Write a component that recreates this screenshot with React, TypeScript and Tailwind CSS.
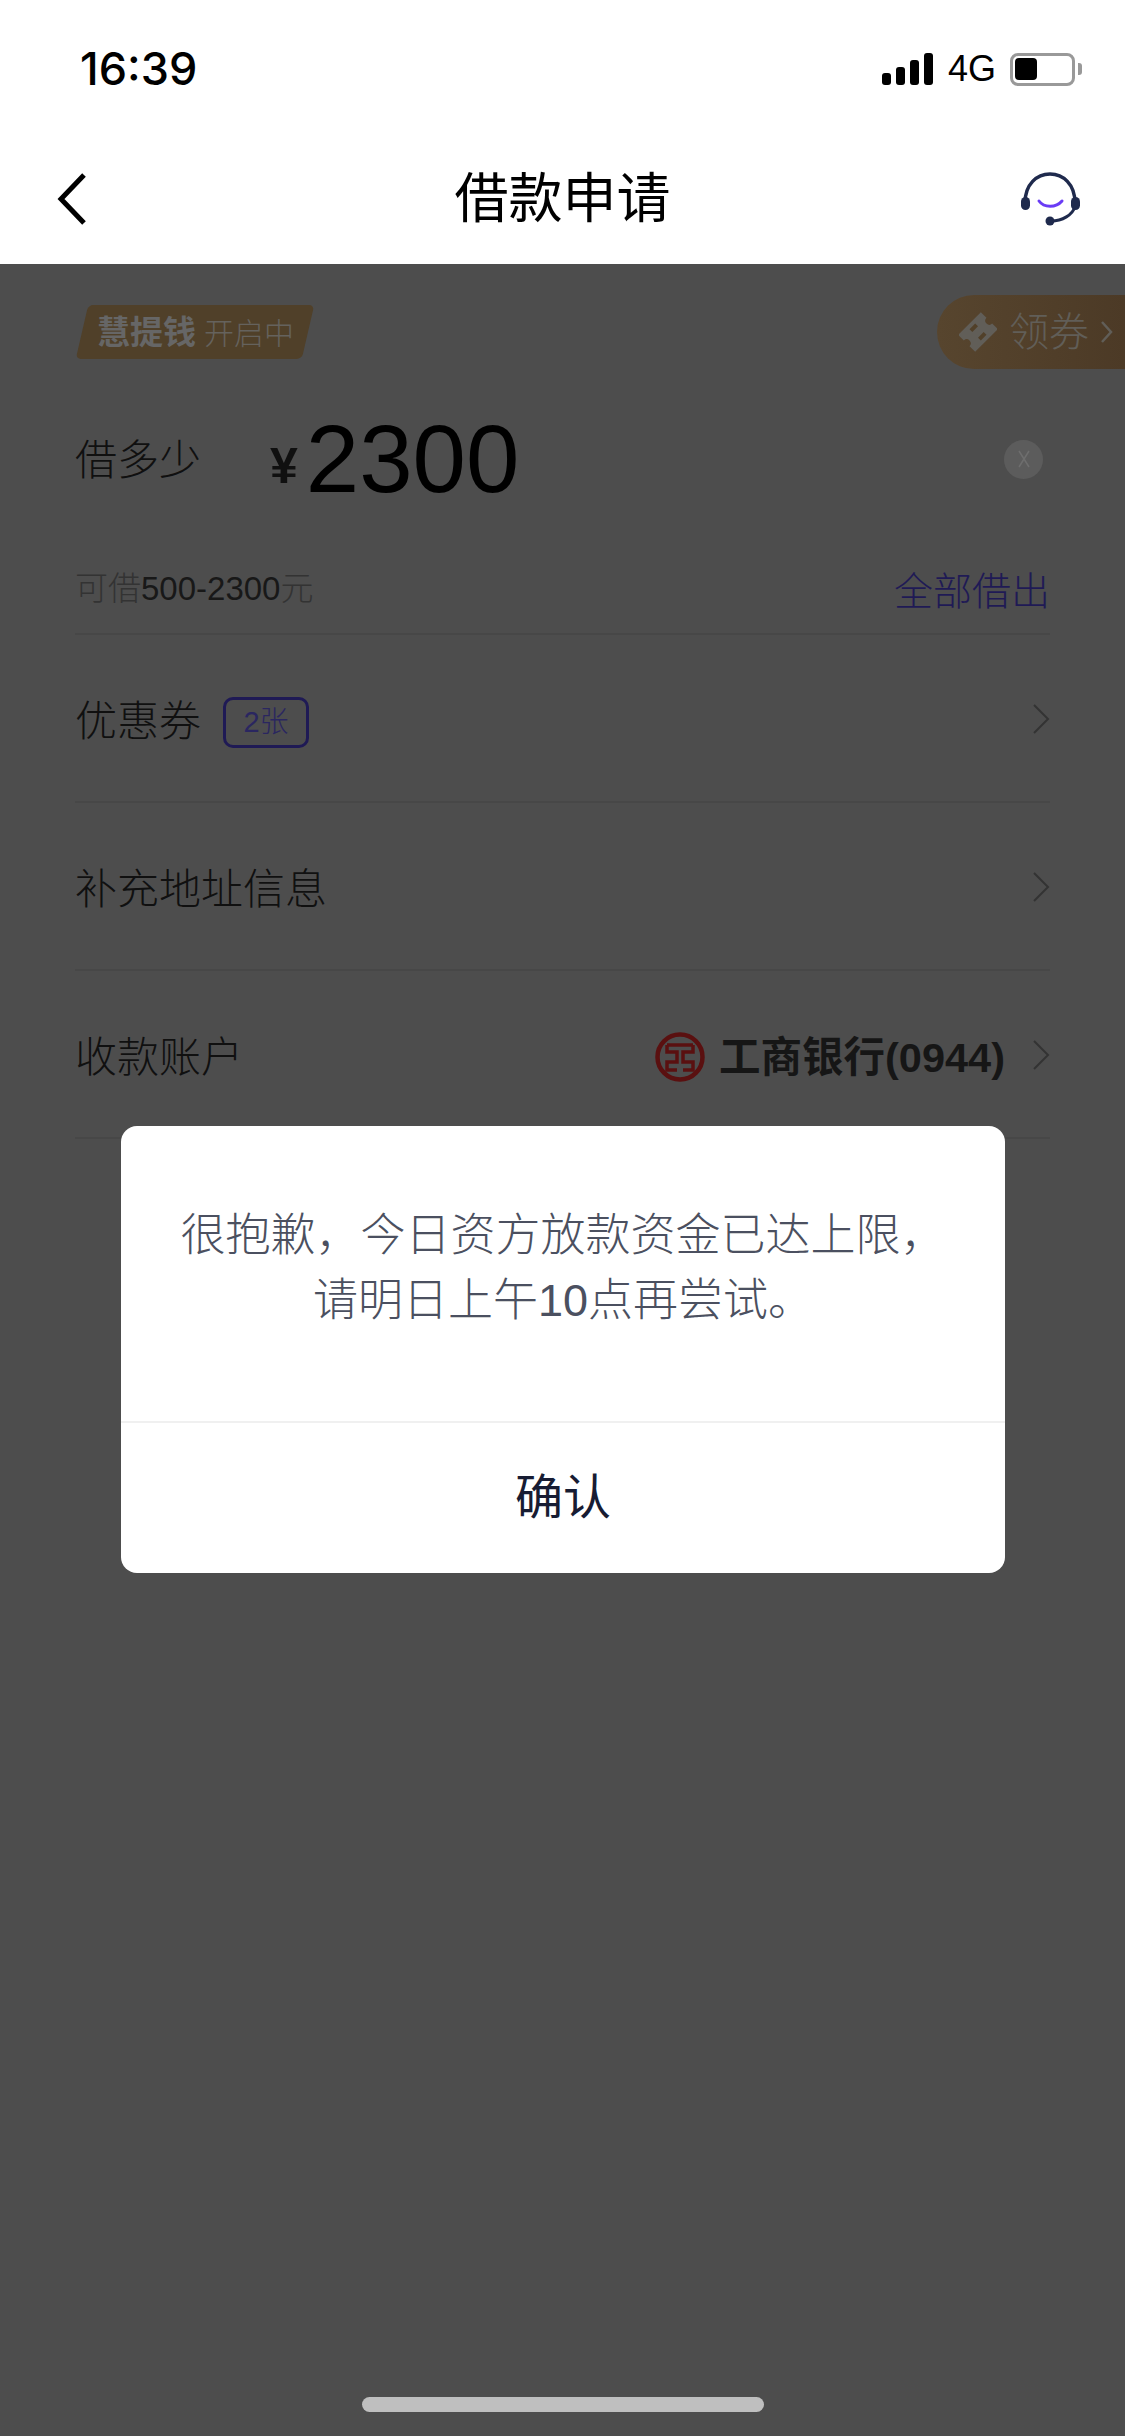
const sans = "font-['Liberation_Sans','Noto_Sans_CJK_SC',sans-serif]";

const Chevron = () => (
  <svg width="18" height="30" viewBox="0 0 18 30" fill="none" className="-mt-[6px] shrink-0">
    <path d="M2 1 L16 15 L2 29" stroke="#333333" strokeWidth="2" />
  </svg>
);

const Row = ({ children }: { children: React.ReactNode }) => (
  <div className="flex h-[168px] items-center justify-between border-b-2 border-[#474747] pt-[8px]">{children}</div>
);

const IcbcLogo = () => (
  <svg width="50" height="50" viewBox="0 0 100 100" fill="none" stroke="#5a1010" className="-mt-[3px] shrink-0">
    <circle cx="50" cy="50" r="45" strokeWidth="9" />
    <path d="M24 26 H76 M24 26 V40 H44 V60 H24 V76 H44 M76 26 V40 H56 V60 H76 V76 H56" strokeWidth="7" />
  </svg>
);

const Headset = () => (
  <svg width="64" height="60" viewBox="0 0 64 60" fill="none">
    <path d="M7 33 C7 14 19 4 32 4 C45 4 57 14 57 33" stroke="#1f2a4d" strokeWidth="3.5" />
    <rect x="3" y="27" width="9" height="13" rx="4.5" fill="#1f2a4d" />
    <rect x="53" y="27" width="9" height="13" rx="4.5" fill="#1f2a4d" />
    <path d="M57 36 C55 45 44 51 33 51" stroke="#1f2a4d" strokeWidth="3" />
    <circle cx="32" cy="51" r="4.5" fill="#1f2a4d" />
    <path d="M21 31 C26 38 38 38 44 31" stroke="#6a3cf5" strokeWidth="3" strokeLinecap="round" />
  </svg>
);

const Signal = () => (
  <svg width="51" height="32" viewBox="0 0 51 32" fill="#000000">
    <rect x="0" y="20" width="9" height="12" rx="3" />
    <rect x="14" y="14" width="9" height="18" rx="3" />
    <rect x="28" y="7" width="9" height="25" rx="3" />
    <rect x="42" y="0" width="9" height="32" rx="3" />
  </svg>
);

const Ticket = () => (
  <svg width="38" height="42" viewBox="0 0 38 42" fill="none">
    <g transform="rotate(-45 19 21)">
      <path d="M3 9 H35 V17 A4 4 0 0 0 35 25 V33 H3 V25 A4 4 0 0 0 3 17 Z" fill="#615e58" />
      <path d="M15 15 H23 M15 27 H23" stroke="#514029" strokeWidth="4" />
    </g>
  </svg>
);

export default function App() {
  return (
    <div className={`relative flex h-[2436px] w-[1125px] flex-col overflow-hidden bg-white font-light ${sans}`}>
      {/* status bar */}
      <div className="flex h-[136px] items-center justify-between pl-[80px] pr-[43px]">
        <div className="font-['Inter',sans-serif] text-[45px] font-medium leading-none text-black">16:39</div>
        <div className="flex items-center pt-[2px]">
          <Signal />
          <span className="ml-[15px] text-[36px] font-normal leading-none text-black">4G</span>
          <div className="ml-[14px] flex h-[33px] w-[65px] items-center rounded-[8px] border-[3px] border-[#999999] pl-[2px]">
            <div className="h-[22px] w-[22px] rounded-[4px] bg-black" />
          </div>
          <div className="ml-[3px] h-[12px] w-[4px] rounded-r-[3px] bg-[#999999]" />
        </div>
      </div>

      {/* nav */}
      <div className="relative flex h-[128px] items-center justify-between pl-[55px] pr-[43px]">
        <svg width="34" height="56" viewBox="0 0 34 56" fill="none" className="-mt-[3px]">
          <path d="M29 4 L6 28 L29 52" stroke="#000000" strokeWidth="5" />
        </svg>
        <div className="absolute inset-x-0 -mt-[3px] text-center text-[54px] font-normal leading-none text-black">借款申请</div>
        <Headset />
      </div>

      {/* dimmed page */}
      <div className="flex flex-1 flex-col bg-[#4d4d4d] px-[75px] pt-[31px]">
        <div className="flex h-[74px] items-center justify-between">
          <div className="ml-[7px] flex h-[54px] w-[226px] -skew-x-[13deg] items-center justify-center rounded-[5px] bg-[#504029]">
            <div className="flex skew-x-[13deg] items-baseline gap-[8px]">
              <span className="text-[33px] font-bold leading-none text-[#666666]">慧提钱</span>
              <span className="text-[30px] leading-none text-[#65625d]">开启中</span>
            </div>
          </div>
          <div className="-mr-[75px] flex h-[74px] w-[188px] items-center rounded-l-[37px] bg-gradient-to-r from-[#57452e] to-[#4c3a26] pl-[22px]">
            <Ticket />
            <span className="ml-[12px] text-[40px] leading-none text-[#615e58]">领券</span>
            <svg width="14" height="26" viewBox="0 0 14 26" fill="none" className="ml-[11px]">
              <path d="M2 3 L11 13 L2 23" stroke="#615e58" strokeWidth="2.5" />
            </svg>
          </div>
        </div>

        <div className="mt-[40px] flex h-[100px] items-center">
          <span className="mt-[3px] w-[195px] text-[42px] leading-none text-[#101010]">借多少</span>
          <span className="mt-[14px] text-[50px] font-bold leading-none text-[#101010]">¥</span>
          <span className="ml-[8px] text-[96px] leading-none text-black">2300</span>
          <div className="ml-auto mr-[7px] flex h-[39px] w-[39px] items-center justify-center rounded-full bg-[#5c5c5c]">
            <svg width="18" height="22" viewBox="0 0 18 22" fill="none">
              <path d="M4 3 L14 19 M14 3 L4 19" stroke="#6e6e6e" strokeWidth="1.5" />
            </svg>
          </div>
        </div>

        <div className="mt-[51px] flex h-[60px] items-center justify-between">
          <div className="-mt-[3px] text-[33px] leading-none text-[#333333]">
            可借<span className="text-[#181818]">500-2300</span>元
          </div>
          <span className="mt-[3px] text-[39px] leading-none text-[#1f1a55]">全部借出</span>
        </div>

        <div className="mt-[13px] h-[2px] bg-[#474747]" />

        <Row>
          <div className="flex items-center">
            <span className="text-[42px] leading-none text-[#101010]">优惠券</span>
            <span className="ml-[22px] flex h-[51px] w-[86px] items-center justify-center rounded-[10px] border-[3px] border-[#1f1a55] text-[29px] leading-none text-[#2a2660]">
              2张
            </span>
          </div>
          <Chevron />
        </Row>
        <Row>
          <span className="text-[42px] leading-none text-[#101010]">补充地址信息</span>
          <Chevron />
        </Row>
        <Row>
          <span className="text-[42px] leading-none text-[#101010]">收款账户</span>
          <div className="flex items-center">
            <IcbcLogo />
            <span className="ml-[14px] text-[41.5px] font-bold leading-none text-[#161616]">工商银行(0944)</span>
            <span className="ml-[27px]">
              <Chevron />
            </span>
          </div>
        </Row>
      </div>

      {/* dialog */}
      <div className="absolute left-[121px] top-[1126px] flex h-[447px] w-[884px] flex-col rounded-[16px] bg-white">
        <div className="flex h-[295px] flex-col items-center pt-[77px] text-[45px] leading-[65px] text-[#4b5060]">
          <div>很抱歉，今日资方放款资金已达上限，</div>
          <div>请明日上午10点再尝试。</div>
        </div>
        <div className="flex flex-1 items-center justify-center border-t-2 border-[#f0f0f0] text-[48px] font-normal leading-none text-[#171c33]">
          确认
        </div>
      </div>

      {/* home indicator */}
      <div className="absolute bottom-[24px] left-[362px] h-[15px] w-[402px] rounded-full bg-[#bfbfbf]" />
    </div>
  );
}
